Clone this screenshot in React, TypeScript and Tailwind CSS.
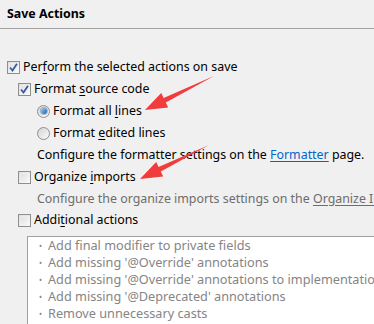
import React from "react";

// ── small win7-style controls ────────────────────────────────────────────────

function CheckBox({ checked }: { checked?: boolean }) {
  return (
    <span className="relative mr-[3px] inline-flex h-[13px] w-[13px] shrink-0 items-center justify-center border border-[#8f8f8f] bg-gradient-to-br from-[#dcdcdc] to-[#fbfbfb]">
      <span className="absolute inset-[1px] border border-[#f4f4f4]/60" />
      {checked && (
        <svg width="11" height="11" viewBox="0 0 11 11" className="relative">
          <path d="M2 5.5 L4.5 8.5 L9 1.8" fill="none" stroke="#3b58a8" strokeWidth="1.8" />
        </svg>
      )}
    </span>
  );
}

function Radio({ checked }: { checked?: boolean }) {
  return (
    <span className="mr-[3px] inline-flex h-[13px] w-[13px] shrink-0 items-center justify-center rounded-full border border-[#8f8f8f] bg-gradient-to-br from-[#d4d4d4] to-[#fafafa]">
      {checked && (
        <span className="h-[6px] w-[6px] rounded-full bg-gradient-to-br from-[#9bd0f5] to-[#1b5ea8] ring-1 ring-[#2a6cb0]/40" />
      )}
    </span>
  );
}

function U({ children }: { children: React.ReactNode }) {
  return <span className="underline underline-offset-2">{children}</span>;
}

function Arrow({ className }: { className: string }) {
  // tip at (5,34), tail up-right
  return (
    <svg width="80" height="40" viewBox="0 0 80 40" className={className}>
      <polygon
        points="5,34 21.2,17.1 23.6,22.1 74,0 25.8,26.5 28.2,31.5"
        fill="#f23b3b"
      />
    </svg>
  );
}

const extras = [
  "Add final modifier to private fields",
  "Add missing '@Override' annotations",
  "Add missing '@Override' annotations to implementations of interface methods",
  "Add missing '@Deprecated' annotations",
  "Remove unnecessary casts",
];

// ── page ─────────────────────────────────────────────────────────────────────

export default function App() {
  return (
    <div
      className="relative h-[324px] w-[374px] overflow-hidden bg-[#f0f0f0] text-[12.4px] text-black"
      style={{ fontFamily: '"Noto Sans", "Open Sans", sans-serif' }}
    >
      <div className="flex h-[29px] items-center border-b border-[#a0a0a0] pl-[7px] text-[12.4px] font-bold">
        Save Actions
      </div>

      <div className="flex flex-col pl-[7px] pt-[27px] whitespace-nowrap">
        <div className="flex h-[22px] items-center">
          <CheckBox checked />
          <span>Per<U>f</U>orm the selected actions on save</span>
        </div>
        <div className="flex h-[22px] items-center pl-[11px]">
          <CheckBox checked />
          <span>Format <U>s</U>ource code</span>
        </div>
        <div className="flex h-[22px] items-center pl-[30px]">
          <Radio checked />
          <span>Format all <U>l</U>ines</span>
        </div>
        <div className="flex h-[22px] items-center pl-[30px]">
          <Radio />
          <span>Format <U>e</U>dited lines</span>
        </div>
        <div className="flex h-[22px] items-center pl-[30px]">
          <span>
            Configure the formatter settings on the{" "}
            <span className="text-[#0066cc] underline underline-offset-2">Formatter</span> page.
          </span>
        </div>
        <div className="flex h-[22px] items-center pl-[11px]">
          <CheckBox />
          <span>Organize <U>i</U>mports</span>
        </div>
        <div className="flex h-[22px] items-center pl-[30px] text-[#6d6d6d]">
          <span>
            Configure the organize imports settings on the{" "}
            <span className="underline underline-offset-2">Organize Imports</span> page.
          </span>
        </div>
        <div className="flex h-[21px] items-center pl-[11px]">
          <CheckBox />
          <span>Addi<U>t</U>ional actions</span>
        </div>
        <div className="ml-[20px] mt-[5px] h-[200px] border-l border-t border-[#a0a0a0] bg-white pl-[11px] text-[12.7px] text-[#858585]">
          {extras.map((e) => (
            <div key={e} className="flex h-[17px] items-center">
              <span className="mr-[6px] text-[8px]">•</span>
              <span>{e}</span>
            </div>
          ))}
        </div>
      </div>

      <Arrow className="absolute left-[140px] top-[76px]" />
      <Arrow className="absolute left-[135px] top-[145px]" />
    </div>
  );
}
